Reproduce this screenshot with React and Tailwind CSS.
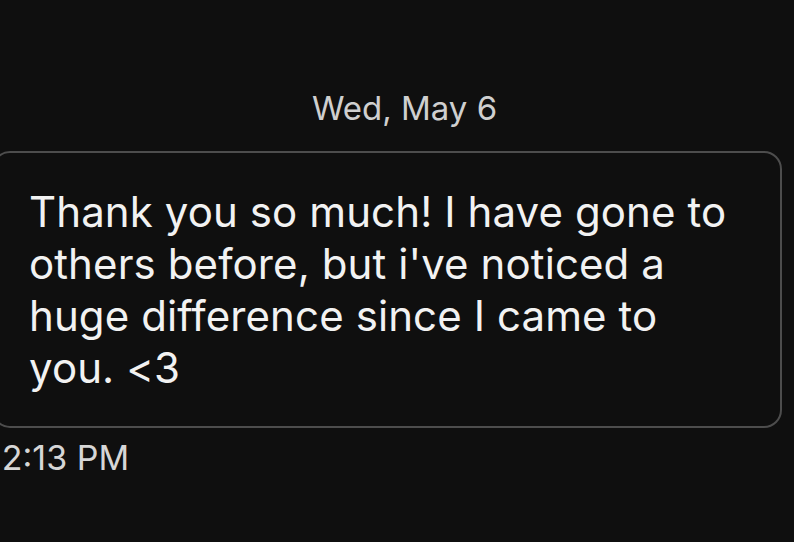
const lines = [
  'Thank you so much! I have gone to',
  "others before, but i've noticed a",
  'huge difference since I came to',
  'you. <3',
];

export default function App() {
  return (
    <div
      className="h-[542px] w-[794px] overflow-hidden bg-[#0f0f0f] text-white"
      style={{ fontFamily: 'Inter, "Open Sans", sans-serif' }}
    >
      <div className="-ml-[8px] w-[790px]">
        <div className="pl-[35px] pt-[88px] text-center text-[33px] leading-[40px] text-[#cfcfcf]">
          Wed, May 6
        </div>
        <div className="mt-[23px] rounded-[18px] border-2 border-[#4d4d4d] pb-[32px] pl-[35px] pr-[20px] pt-[33px]">
          <p className="text-[42px] leading-[52px] tracking-[0.1px] text-[#f2f2f2]">
            {lines.map((line) => (
              <span key={line} className="block whitespace-nowrap">
                {line}
              </span>
            ))}
          </p>
        </div>
        <div className="-ml-[4px] mt-[10px] text-[34px] leading-[40px] text-[#d6d6d6]">12:13 PM</div>
      </div>
    </div>
  );
}
